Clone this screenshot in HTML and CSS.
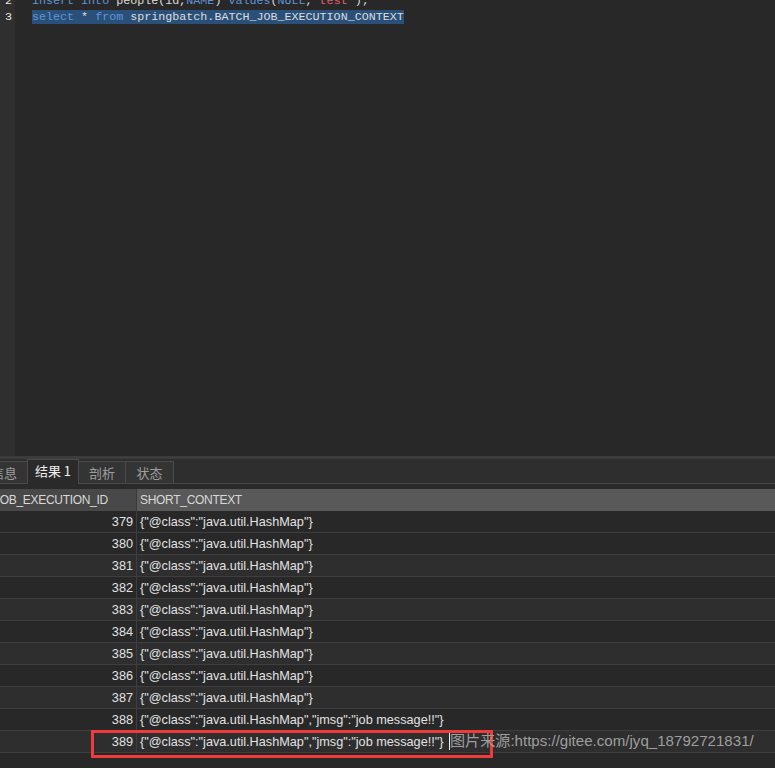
FILE: index.html
```html
<!DOCTYPE html>
<html lang="zh-CN">
<head>
<meta charset="utf-8">
<title>Query</title>
<link rel="stylesheet" href="styles.css">
</head>
<body>
<div class="page">
  <div class="editor">
    <div class="gutter">
      <div class="ln first">2</div>
      <div class="ln">3</div>
    </div>
    <div class="code">
      <div class="line first"><span class="kw">insert into</span> people(id,<span class="kw">NAME</span>) <span class="kw">values</span>(<span class="kw">NULL</span>,<span class="str">'test'</span>);</div>
      <div class="line"><span class="sel"><span class="kw">select</span> * <span class="kw">from</span> springbatch.BATCH_JOB_EXECUTION_CONTEXT</span></div>
    </div>
  </div>
  <div class="divider"></div>
  <div class="tabbar">
    <div class="tab t-info">信息</div>
    <div class="tab active t-res">结果 1</div>
    <div class="tab t-prof">剖析</div>
    <div class="tab t-stat">状态</div>
  </div>
  <div class="gap"></div>
  <div class="grid">
    <div class="row head">
      <div class="c1">JOB_EXECUTION_ID</div>
      <div class="c2">SHORT_CONTEXT</div>
    </div>
    <div class="row"><div class="c1">379</div><div class="c2">{"@class":"java.util.HashMap"}</div></div>
    <div class="row"><div class="c1">380</div><div class="c2">{"@class":"java.util.HashMap"}</div></div>
    <div class="row alt"><div class="c1">381</div><div class="c2">{"@class":"java.util.HashMap"}</div></div>
    <div class="row"><div class="c1">382</div><div class="c2">{"@class":"java.util.HashMap"}</div></div>
    <div class="row alt"><div class="c1">383</div><div class="c2">{"@class":"java.util.HashMap"}</div></div>
    <div class="row"><div class="c1">384</div><div class="c2">{"@class":"java.util.HashMap"}</div></div>
    <div class="row alt"><div class="c1">385</div><div class="c2">{"@class":"java.util.HashMap"}</div></div>
    <div class="row"><div class="c1">386</div><div class="c2">{"@class":"java.util.HashMap"}</div></div>
    <div class="row alt"><div class="c1">387</div><div class="c2">{"@class":"java.util.HashMap"}</div></div>
    <div class="row"><div class="c1">388</div><div class="c2">{"@class":"java.util.HashMap","jmsg":"job message!!"}</div></div>
    <div class="row alt"><div class="c1">389</div><div class="c2">{"@class":"java.util.HashMap","jmsg":"job message!!"}</div></div>
  </div>
  <div class="redbox"></div>
  <div class="caret"></div>
  <div class="watermark">图片来源:https://gitee.com/jyq_18792721831/</div>
</div>
</body>
</html>
```
FILE: styles.css
```css
html, body {
  margin: 0;
  padding: 0;
  background: #282828;
}
.page {
  position: relative;
  width: 775px;
  height: 768px;
  overflow: hidden;
  background: #282828;
}
.editor {
  display: flex;
  height: 456px;
  background: #282828;
  overflow: hidden;
}
.gutter {
  width: 15px;
  background: #2f2f2f;
  padding-right: 3px;
  box-sizing: border-box;
}
.ln, .line {
  font-family: "Liberation Mono", monospace;
  font-size: 11.7px;
  line-height: 14px;
  height: 14px;
  white-space: pre;
}
.ln.first, .line.first {
  margin-top: -6px;
  height: 16px;
}
.ln {
  text-align: right;
  color: #e6e6e6;
}
.code {
  padding-left: 17px;
  color: #dcdcdc;
}
.kw { color: #5f95da; }
.str { color: #e25c6c; }
.sel {
  display: inline-block;
  height: 14px;
  background: #2a5079;
}
.divider {
  height: 3px;
  background: #3c3c3c;
}
.tabbar {
  height: 25px;
  box-sizing: border-box;
  border-bottom: 1px solid #4a4a4a;
  background: #2e2e2e;
  display: flex;
  align-items: flex-end;
  margin-left: -20px;
  font-family: "Noto Sans CJK SC", sans-serif;
  font-size: 13px;
}
.tab {
  height: 22px;
  box-sizing: border-box;
  border: 1px solid #4a4a4a;
  border-bottom: none;
  background: #343434;
  color: #9c9c9c;
  display: flex;
  align-items: center;
  justify-content: center;
  margin-left: -1px;
}
.tab:first-child { margin-left: 0; }
.t-info { width: 48px; }
.t-res { width: 52px; }
.t-prof { width: 48px; }
.t-stat { width: 49px; }
.tab.active {
  height: 25px;
  margin-bottom: -1px;
  background: #2a2a2a;
  color: #eeeeee;
  padding-bottom: 3px;
  position: relative;
  z-index: 1;
}
.gap {
  height: 5px;
  background: #2a2a2a;
}
.grid {
  margin-left: -9px;
  font-family: "Liberation Sans", Arial, sans-serif;
  font-size: 12.7px;
  color: #e2e2e2;
}
.row {
  display: flex;
  height: 22px;
  box-sizing: border-box;
  border-bottom: 1px solid #3e3e3e;
  background: #282828;
}
.row.alt { background: #2e2e2e; }
.row > div {
  display: flex;
  align-items: center;
  white-space: nowrap;
  overflow: hidden;
}
.c1 {
  width: 146px;
  box-sizing: border-box;
  border-right: 1px solid #3e3e3e;
  justify-content: flex-end;
  padding-right: 3px;
}
.c2 {
  flex: 1;
  padding-left: 3px;
}
.row.head {
  border-bottom: none;
  font-size: 12px;
  letter-spacing: -0.3px;
  color: #d8d8d8;
}
.row.head .c1 {
  background: #484848;
  justify-content: flex-start;
  padding-left: 3px;
  border-right: 1px solid #3a3a3a;
}
.row.head .c2 { background: #595959; }
.redbox {
  position: absolute;
  left: 91px;
  top: 730px;
  width: 402px;
  height: 28px;
  box-sizing: border-box;
  border: 3px solid #ef3b3b;
}
.caret {
  position: absolute;
  left: 449px;
  top: 733px;
  width: 1px;
  height: 17px;
  background: #f0f0f0;
}
.watermark {
  position: absolute;
  left: 450px;
  top: 731px;
  line-height: 20px;
  font-family: "Liberation Sans", "Noto Sans CJK SC", sans-serif;
  font-size: 15.1px;
  color: #9e9e9e;
  white-space: nowrap;
}
```
